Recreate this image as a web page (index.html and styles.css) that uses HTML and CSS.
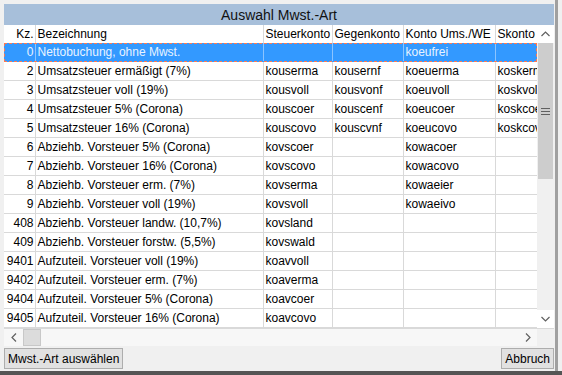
FILE: index.html
```html
<!DOCTYPE html>
<html lang="de">
<head>
<meta charset="utf-8">
<title>Auswahl Mwst.-Art</title>
<link rel="stylesheet" href="styles.css">
</head>
<body>
<div class="screen">
  <div class="dialog">
    <div class="titlebar">Auswahl Mwst.-Art</div>
    <div class="gridarea">
      <div class="tablewrap">
        <table class="grid">
          <colgroup>
            <col class="c-kz"><col class="c-bez"><col class="c-st"><col class="c-gg"><col class="c-ko"><col class="c-sk">
          </colgroup>
          <thead>
            <tr><th class="kz">Kz.</th><th>Bezeichnung</th><th>Steuerkonto</th><th>Gegenkonto</th><th>Konto Ums./WE</th><th>Skonto</th></tr>
          </thead>
          <tbody>
            <tr class="sel"><td class="kz">0</td><td>Nettobuchung, ohne Mwst.</td><td></td><td></td><td>koeufrei</td><td></td></tr>
            <tr><td class="kz">2</td><td>Umsatzsteuer ermäßigt (7%)</td><td>kouserma</td><td>kousernf</td><td>koeuerma</td><td>koskerma</td></tr>
            <tr><td class="kz">3</td><td>Umsatzsteuer voll (19%)</td><td>kousvoll</td><td>kousvonf</td><td>koeuvoll</td><td>koskvoll</td></tr>
            <tr><td class="kz">4</td><td>Umsatzsteuer 5% (Corona)</td><td>kouscoer</td><td>kouscenf</td><td>koeucoer</td><td>koskcoer</td></tr>
            <tr><td class="kz">5</td><td>Umsatzsteuer 16% (Corona)</td><td>kouscovo</td><td>kouscvnf</td><td>koeucovo</td><td>koskcovo</td></tr>
            <tr><td class="kz">6</td><td>Abziehb. Vorsteuer 5% (Corona)</td><td>kovscoer</td><td></td><td>kowacoer</td><td></td></tr>
            <tr><td class="kz">7</td><td>Abziehb. Vorsteuer 16% (Corona)</td><td>kovscovo</td><td></td><td>kowacovo</td><td></td></tr>
            <tr><td class="kz">8</td><td>Abziehb. Vorsteuer erm. (7%)</td><td>kovserma</td><td></td><td>kowaeier</td><td></td></tr>
            <tr><td class="kz">9</td><td>Abziehb. Vorsteuer voll (19%)</td><td>kovsvoll</td><td></td><td>kowaeivo</td><td></td></tr>
            <tr><td class="kz">408</td><td>Abziehb. Vorsteuer landw. (10,7%)</td><td>kovsland</td><td></td><td></td><td></td></tr>
            <tr><td class="kz">409</td><td>Abziehb. Vorsteuer forstw. (5,5%)</td><td>kovswald</td><td></td><td></td><td></td></tr>
            <tr><td class="kz">9401</td><td>Aufzuteil. Vorsteuer voll (19%)</td><td>koavvoll</td><td></td><td></td><td></td></tr>
            <tr><td class="kz">9402</td><td>Aufzuteil. Vorsteuer erm. (7%)</td><td>koaverma</td><td></td><td></td><td></td></tr>
            <tr><td class="kz">9404</td><td>Aufzuteil. Vorsteuer 5% (Corona)</td><td>koavcoer</td><td></td><td></td><td></td></tr>
            <tr><td class="kz">9405</td><td>Aufzuteil. Vorsteuer 16% (Corona)</td><td>koavcovo</td><td></td><td></td><td></td></tr>
          </tbody>
        </table>
      </div>
      <div class="vscroll">
        <div class="sbtn"><svg width="9" height="6" viewBox="0 0 9 6"><polyline points="0.5,5 4.5,1 8.5,5" fill="none" stroke="#606060" stroke-width="1.2"/></svg></div>
        <div class="vthumb"><svg width="9" height="7" viewBox="0 0 9 7"><path d="M0 0.5H9M0 3.5H9M0 6.5H9" stroke="#606060" stroke-width="1"/></svg></div>
        <div class="vtrack"></div>
        <div class="sbtn"><svg width="9" height="6" viewBox="0 0 9 6"><polyline points="0.5,1 4.5,5 8.5,1" fill="none" stroke="#606060" stroke-width="1.2"/></svg></div>
      </div>
    </div>
    <div class="hscroll">
      <div class="hbtn"><svg width="6" height="9" viewBox="0 0 6 9"><polyline points="5,0.5 1,4.5 5,8.5" fill="none" stroke="#606060" stroke-width="1.2"/></svg></div>
      <div class="hthumb"></div>
      <div class="htrack"></div>
      <div class="hbtn"><svg width="6" height="9" viewBox="0 0 6 9"><polyline points="1,0.5 5,4.5 1,8.5" fill="none" stroke="#606060" stroke-width="1.2"/></svg></div>
      <div class="corner"></div>
    </div>
    <div class="footer">
      <button class="btn">Mwst.-Art auswählen</button>
      <button class="btn">Abbruch</button>
    </div>
  </div>
  <div class="sideframe"></div>
</div>
<div class="bottomline"></div>
</body>
</html>
```

FILE: styles.css
```css
html, body {
  margin: 0;
  padding: 0;
  background: #f0f0f0;
  font-family: "Liberation Sans", Arial, sans-serif;
  font-size: 12px;
  color: #000;
}

.screen {
  display: flex;
  height: 371px;
  padding-left: 4px;
  padding-top: 4px;
  box-sizing: border-box;
}

.dialog {
  width: 550px;
  display: flex;
  flex-direction: column;
}

.sideframe {
  width: 3px;
  margin-top: -4px;
  background: #a0a0a0;
  margin-left: 1px;
}

.titlebar {
  height: 21px;
  background: #a7bfda;
  text-align: center;
  font-size: 14px;
  line-height: 22px;
  color: #111;
}

.gridarea {
  display: flex;
  height: 303px;
  background: #fff;
}

.tablewrap {
  width: 533px;
  overflow: hidden;
}

.grid {
  border-collapse: collapse;
  table-layout: fixed;
  width: 533px;
}

.c-kz { width: 31px; }
.c-bez { width: 228px; }
.c-st { width: 69px; }
.c-gg { width: 71px; }
.c-ko { width: 92px; }
.c-sk { width: 42px; }

.grid th, .grid td {
  height: 18px;
  padding: 0 0 0 2px;
  border-right: 1px solid #d9d9d9;
  border-bottom: 1px solid #d9d9d9;
  white-space: nowrap;
  overflow: hidden;
  text-align: left;
  font-weight: normal;
  line-height: 18px;
  box-sizing: border-box;
}

.grid th {
  height: 18px;
  border-bottom: none;
}

.grid .kz {
  text-align: right;
  padding: 0 1px 0 0;
}

.grid td:last-child {
  text-overflow: clip;
}

.grid tr.sel td {
  background: #3399ff;
  color: #e8f3ff;
  border-right-color: #8cc4ff;
  border-bottom-color: #3399ff;
}

.grid tr.sel {
  outline: 1px dashed #ff7a50;
  outline-offset: -1px;
}

.vscroll {
  width: 17px;
  display: flex;
  flex-direction: column;
  background: #f0f0f0;
}

.sbtn {
  height: 18px;
  display: flex;
  align-items: center;
  justify-content: center;
  background: #fff;
}

.vthumb {
  height: 136px;
  background: #cdcdcd;
  margin: 0 1px;
  display: flex;
  align-items: center;
  justify-content: center;
}

.vtrack {
  flex: 1;
  background: #f0f0f0;
}

.hscroll {
  height: 18px;
  display: flex;
  background: #f7f7f7;
  border-top: 1px solid #d9d9d9;
  box-sizing: border-box;
}

.hbtn {
  width: 19px;
  display: flex;
  align-items: center;
  justify-content: center;
}

.hthumb {
  width: 18px;
  background: #dcdcdc;
  border: 1px solid #c8c8c8;
  box-sizing: border-box;
}

.htrack {
  flex: 1;
}

.corner {
  width: 17px;
  background: #f0f0f0;
}

.footer {
  flex: 1;
  display: flex;
  justify-content: space-between;
  align-items: center;
  background: #f0f0f0;
}

.btn {
  height: 21px;
  padding: 0 3px;
  background: #e1e1e1;
  border: 1px solid #adadad;
  font-family: "Liberation Sans", Arial, sans-serif;
  font-size: 12px;
  color: #000;
  margin: 0;
}

.bottomline {
  height: 4px;
  background: #555;
}
```
